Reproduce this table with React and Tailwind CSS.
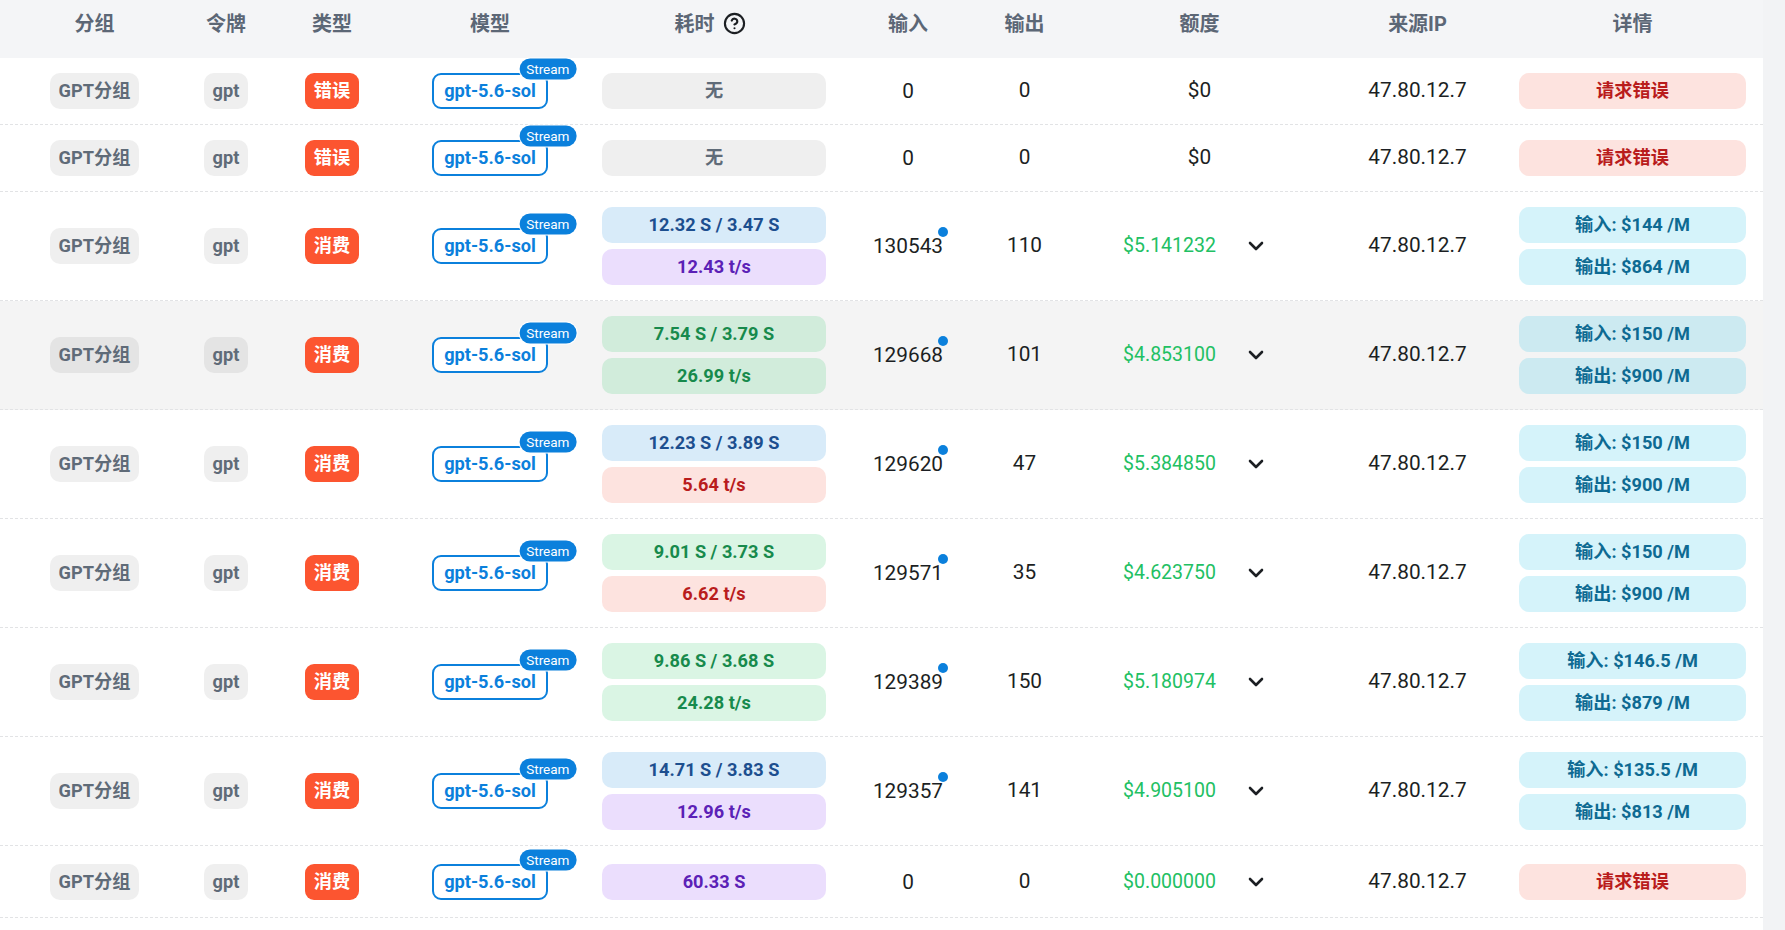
import React from "react";
import { CircleHelp } from "lucide-react";

const FONT = { fontFamily: 'Roboto, "Noto Sans CJK SC", "Noto Sans", sans-serif' };

const GRID =
  "grid grid-cols-[189px_74px_138px_178px_270px_118px_115px_235px_201px_1fr] items-center";

const TONE = {
  gray: "bg-[rgba(46,50,56,0.08)] text-[#5f6b78]",
  blue: "bg-[rgba(25,135,220,0.17)] text-[#1d4f8f]",
  purple: "bg-[rgba(139,62,246,0.17)] text-[#5b21b6]",
  green: "bg-[rgba(34,197,94,0.17)] text-[#178a4c]",
  red: "bg-[rgba(245,80,55,0.16)] text-[#b91c1c]",
  cyan: "bg-[rgba(20,190,225,0.18)] text-[#0e6a92]",
};

function Pill({ tone, children, className = "" }) {
  return (
    <div
      className={`h-[36px] rounded-[10px] flex items-center justify-center text-[18.2px] font-bold ${TONE[tone]} ${className}`}
    >
      {children}
    </div>
  );
}

function Chevron() {
  return (
    <svg width="16" height="10" viewBox="0 0 16 10" className="shrink-0">
      <polyline
        points="2,2 8,8 14,2"
        fill="none"
        stroke="#1c1f23"
        strokeWidth="2.6"
        strokeLinecap="round"
        strokeLinejoin="round"
      />
    </svg>
  );
}

const rows = [
  { type: "错误", time: [["gray", "无"]], input: "0", dot: false, output: "0", cost: "$0", plain: true, detail: null },
  { type: "错误", time: [["gray", "无"]], input: "0", dot: false, output: "0", cost: "$0", plain: true, detail: null },
  { type: "消费", time: [["blue", "12.32 S / 3.47 S"], ["purple", "12.43 t/s"]], input: "130543", dot: true, output: "110", cost: "$5.141232", detail: ["输入: $144 /M", "输出: $864 /M"] },
  { type: "消费", hover: true, time: [["green", "7.54 S / 3.79 S"], ["green", "26.99 t/s"]], input: "129668", dot: true, output: "101", cost: "$4.853100", detail: ["输入: $150 /M", "输出: $900 /M"] },
  { type: "消费", time: [["blue", "12.23 S / 3.89 S"], ["red", "5.64 t/s"]], input: "129620", dot: true, output: "47", cost: "$5.384850", detail: ["输入: $150 /M", "输出: $900 /M"] },
  { type: "消费", time: [["green", "9.01 S / 3.73 S"], ["red", "6.62 t/s"]], input: "129571", dot: true, output: "35", cost: "$4.623750", detail: ["输入: $150 /M", "输出: $900 /M"] },
  { type: "消费", time: [["green", "9.86 S / 3.68 S"], ["green", "24.28 t/s"]], input: "129389", dot: true, output: "150", cost: "$5.180974", detail: ["输入: $146.5 /M", "输出: $879 /M"] },
  { type: "消费", time: [["blue", "14.71 S / 3.83 S"], ["purple", "12.96 t/s"]], input: "129357", dot: true, output: "141", cost: "$4.905100", detail: ["输入: $135.5 /M", "输出: $813 /M"] },
  { type: "消费", last: true, time: [["purple", "60.33 S"]], input: "0", dot: false, output: "0", cost: "$0.000000", detail: null },
];

function Row({ r }) {
  return (
    <div
      className={`${GRID} ${r.last ? "pt-[18px] pb-[17px]" : "pt-[15px] pb-[15px]"} border-b border-dashed border-[#e2e3e5] ${
        r.hover ? "bg-[#f4f4f4]" : "bg-white"
      } text-[20.8px] text-[#1c1f23]`}
    >
      <div className="flex justify-center">
        <Pill tone="gray" className="px-[9px]">GPT分组</Pill>
      </div>
      <div className="flex justify-center">
        <Pill tone="gray" className="px-[9px]">gpt</Pill>
      </div>
      <div className="flex justify-center">
        <div className="h-[36px] rounded-[9px] px-[9px] flex items-center bg-[#fc5530] text-white text-[18.2px] font-bold">
          {r.type}
        </div>
      </div>
      <div className="flex justify-center">
        <div className="relative">
          <div className="h-[36px] rounded-[9px] border-2 border-[#0b80dc] px-[10px] flex items-center text-[#0b80dc] text-[18.2px] font-bold bg-white">
            gpt-5.6-sol
          </div>
          <div className="absolute right-0 top-[-4px] translate-x-1/2 -translate-y-1/2 h-[21px] px-[7px] rounded-full bg-[#0b80dc] text-white text-[13.5px] leading-[21px] shadow-[0_0_0_1px_#fff]">
            Stream
          </div>
        </div>
      </div>
      <div className="flex flex-col items-center gap-[6px]">
        {r.time.map(([tone, t], i) => (
          <Pill key={i} tone={tone} className="w-[224px]">
            {t}
          </Pill>
        ))}
      </div>
      <div className="flex justify-center">
        <span className="relative leading-[28px]">
          {r.input}
          {r.dot && (
            <span className="absolute right-0 top-0 translate-x-1/2 -translate-y-1/2 w-[10px] h-[10px] rounded-full bg-[#0b80dc]" />
          )}
        </span>
      </div>
      <div className="flex justify-center">{r.output}</div>
      <div className="flex justify-center items-center">
        {r.plain ? (
          <span>{r.cost}</span>
        ) : (
          <div className="flex items-center gap-[32px] pr-[12px]">
            <span className="text-[#22c063] text-[19.5px]">{r.cost}</span>
            <Chevron />
          </div>
        )}
      </div>
      <div className="flex justify-center">47.80.12.7</div>
      <div className="flex flex-col gap-[6px] pl-[1px]">
        {r.detail ? (
          r.detail.map((d, i) => (
            <Pill key={i} tone="cyan" className="w-[227px]">
              {d}
            </Pill>
          ))
        ) : (
          <Pill tone="red" className="w-[227px]">请求错误</Pill>
        )}
      </div>
    </div>
  );
}

export default function App() {
  return (
    <div className="w-[1785px] h-[930px] overflow-hidden flex bg-white" style={FONT}>
      <div className="flex-1 flex flex-col">
        <div className={`${GRID} h-[58px] pb-[11px] bg-[#f4f5f7] text-[20px] font-bold text-[#5c6776]`}>
          <div className="text-center">分组</div>
          <div className="text-center">令牌</div>
          <div className="text-center">类型</div>
          <div className="text-center">模型</div>
          <div className="flex justify-center items-center gap-[8px] pr-[8px]">
            <span>耗时</span>
            <CircleHelp size={23} strokeWidth={2.2} color="#1c1f23" />
          </div>
          <div className="text-center">输入</div>
          <div className="text-center">输出</div>
          <div className="text-center">额度</div>
          <div className="text-center">来源IP</div>
          <div className="w-[228px] pl-[1px] text-center">详情</div>
        </div>
        {rows.map((r, i) => (
          <Row key={i} r={r} />
        ))}
      </div>
      <div className="w-[22px] bg-[#f2f3f5]" />
    </div>
  );
}
